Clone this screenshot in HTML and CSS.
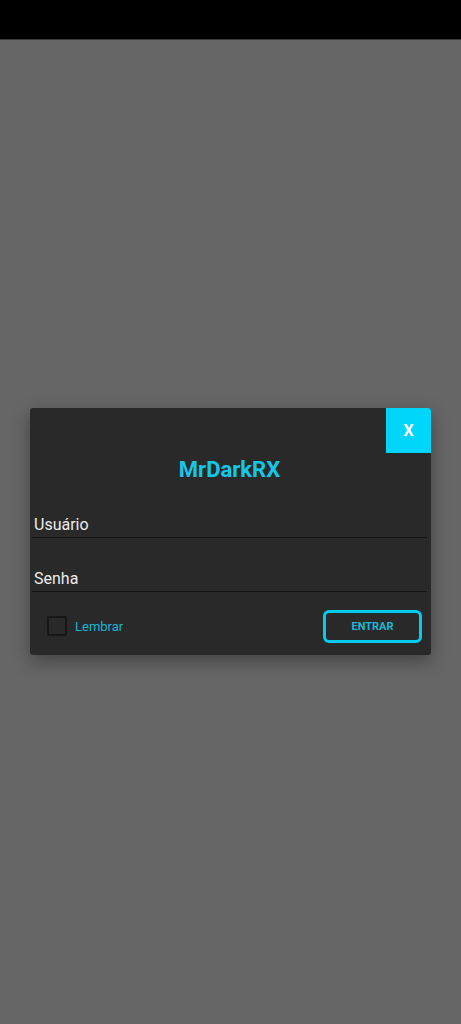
FILE: index.html
```html
<!DOCTYPE html>
<html lang="pt-BR">
<head>
    <meta charset="UTF-8">
    <meta name="viewport" content="width=device-width, initial-scale=1.0">
    <title>MrDarkRX</title>
    <link rel="stylesheet" href="styles.css">
</head>
<body>
    <div class="status-bar"></div>
    <div class="overlay">
        <div class="dialog">
            <button class="close">X</button>
            <h2 class="title">MrDarkRX</h2>
            <div class="field">
                <input type="text" placeholder="Usuário">
            </div>
            <div class="field">
                <input type="password" placeholder="Senha">
            </div>
            <div class="actions">
                <label class="remember">
                    <span class="box"></span>
                    Lembrar
                </label>
                <button class="enter">ENTRAR</button>
            </div>
        </div>
    </div>
</body>
</html>
```

FILE: styles.css
```css
body {
    margin: 0;
    background: #666666;
    font-family: Roboto, "Liberation Sans", sans-serif;
    min-height: 1024px;
    display: flex;
    flex-direction: column;
}
.status-bar {
    height: 39px;
    background: #000;
    border-bottom: 1px solid #3a3a3a;
}
.overlay {
    flex: 1;
    display: flex;
    align-items: center;
    justify-content: center;
    padding-bottom: 2px;
}
.dialog {
    position: relative;
    width: 401px;
    background: #292929;
    border-radius: 3px;
    box-shadow: 0 6px 18px rgba(0, 0, 0, 0.35);
    box-sizing: border-box;
    padding: 0 4px 0 2px;
}
.close {
    position: absolute;
    top: 0;
    right: 0;
    width: 45px;
    height: 45px;
    border: none;
    background: #00d6fa;
    color: white;
    font-family: Roboto, "Liberation Sans", sans-serif;
    font-weight: bold;
    font-size: 16px;
    padding: 0;
    border-top-right-radius: 3px;
}
.title {
    margin: 49px 0 0;
    text-align: center;
    color: #15c6e8;
    font-size: 22px;
    line-height: 26px;
    font-weight: bold;
}
.field {
    margin-top: 32px;
    padding-bottom: 3px;
    border-bottom: 1.5px solid #141414;
}
.field + .field {
    margin-top: 31px;
}
.field input {
    display: block;
    width: 100%;
    box-sizing: border-box;
    border: none;
    background: transparent;
    padding: 0 0 0 2px;
    font-family: Roboto, "Liberation Sans", sans-serif;
    font-size: 16px;
    line-height: 19px;
    height: 19px;
    color: #eee;
    outline: none;
}
.field input::placeholder {
    color: #ececec;
}
.actions {
    display: flex;
    align-items: center;
    justify-content: space-between;
    padding: 18px 5px 12px 15px;
}
.remember {
    display: flex;
    align-items: center;
    gap: 8px;
    color: #17b6d4;
    font-size: 13px;
}
.box {
    width: 16px;
    height: 16px;
    border: 2px solid #171717;
    border-radius: 2px;
}
.enter {
    width: 99px;
    height: 33px;
    border: 3px solid #00cdf0;
    border-radius: 6px;
    background: transparent;
    color: #1ab8d6;
    font-family: Roboto, "Liberation Sans", sans-serif;
    font-size: 11px;
    font-weight: bold;
    padding: 0;
}
```
